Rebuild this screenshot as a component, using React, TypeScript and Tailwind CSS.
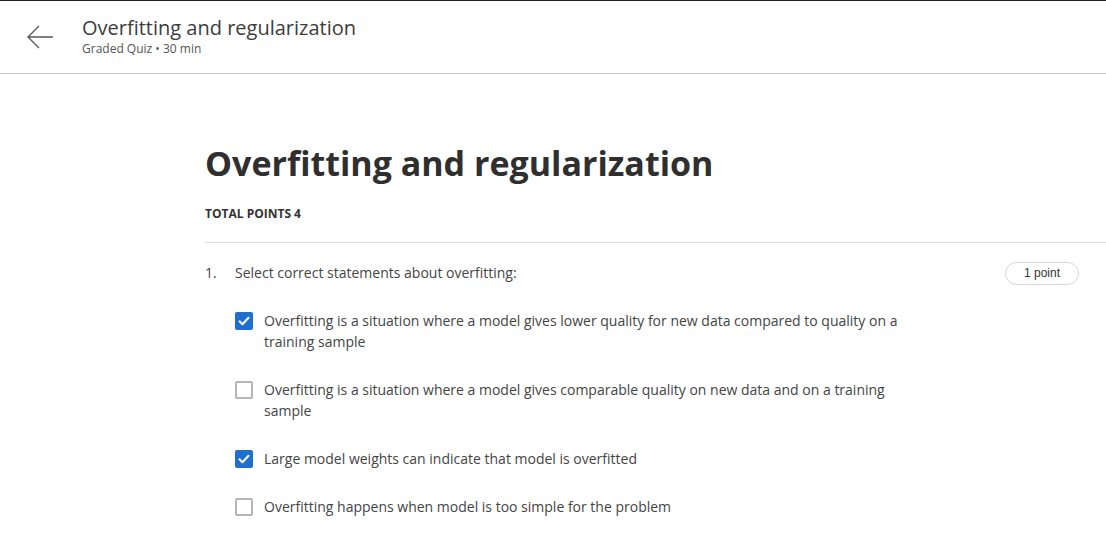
import React from "react";

const options = [
  { text: "Overfitting is a situation where a model gives lower quality for new data compared to quality on a training sample", checked: true },
  { text: "Overfitting is a situation where a model gives comparable quality on new data and on a training sample", checked: false },
  { text: "Large model weights can indicate that model is overfitted", checked: true },
  { text: "Overfitting happens when model is too simple for the problem", checked: false },
];

function Checkbox({ checked }: { checked: boolean }) {
  if (checked) {
    return (
      <span className="mt-[2px] flex h-[18px] w-[18px] shrink-0 items-center justify-center rounded-[2px] bg-[#1f6fce]">
        <svg width="14" height="14" viewBox="0 0 14 14" fill="none">
          <path d="M2.5 7.2l3 3 6-6.4" stroke="#fff" strokeWidth="2" strokeLinecap="round" strokeLinejoin="round" />
        </svg>
      </span>
    );
  }
  return <span className="mt-[2px] h-[18px] w-[18px] shrink-0 rounded-[2px] border-2 border-[#b5b5b5] bg-white" />;
}

export default function App() {
  return (
    <div className="min-h-screen bg-white text-[#333] font-['Open_Sans',sans-serif]">
      {/* Header */}
      <header className="flex h-[74px] items-center border-t border-[#1f1f1f] border-b border-b-[#c4c4c4]">
        <button className="ml-[26px] flex h-6 w-7 items-center justify-center text-[#444]">
          <svg width="28" height="24" viewBox="0 0 28 24" fill="none">
            <path d="M27 12H2M13 1L2 12l11 11" stroke="#555" strokeWidth="1.3" />
          </svg>
        </button>
        <div className="ml-[28px] -mt-[3px] flex flex-col">
          <span className="text-[20px] leading-[26px] text-[#3c3c3c]">Overfitting and regularization</span>
          <span className="text-[12px] leading-[15px] text-[#555]">Graded Quiz • 30 min</span>
        </div>
      </header>

      <main className="pl-[205px] pt-[65px]">
        <h1 className="text-[34px] font-bold leading-[48px] text-[#2f2f2f]">Overfitting and regularization</h1>
        <div className="mt-[19px] text-[12px] font-bold uppercase leading-[16px] text-[#333]">Total points 4</div>
        <div className="mt-[20px] border-t border-[#dcdcdc]" />

        <div className="flex items-start pr-[27px] pt-[19px]">
          <span className="w-[30px] text-[14px] leading-[21px] text-[#444]">1.</span>
          <span className="flex-1 text-[14px] leading-[21px] text-[#444]">Select correct statements about overfitting:</span>
          <span className="rounded-full border border-[#d6d6d6] px-[18px] text-[12px] leading-[21px] text-[#333] font-['Liberation_Sans',sans-serif]">1 point</span>
        </div>

        <div className="ml-[30px] mt-[25px] flex flex-col gap-[27px]">
          {options.map((o, i) => (
            <label key={i} className="flex items-start gap-[11px]">
              <Checkbox checked={o.checked} />
              <span className="max-w-[640px] text-[14px] leading-[21px] text-[#444]">{o.text}</span>
            </label>
          ))}
        </div>
      </main>
    </div>
  );
}
